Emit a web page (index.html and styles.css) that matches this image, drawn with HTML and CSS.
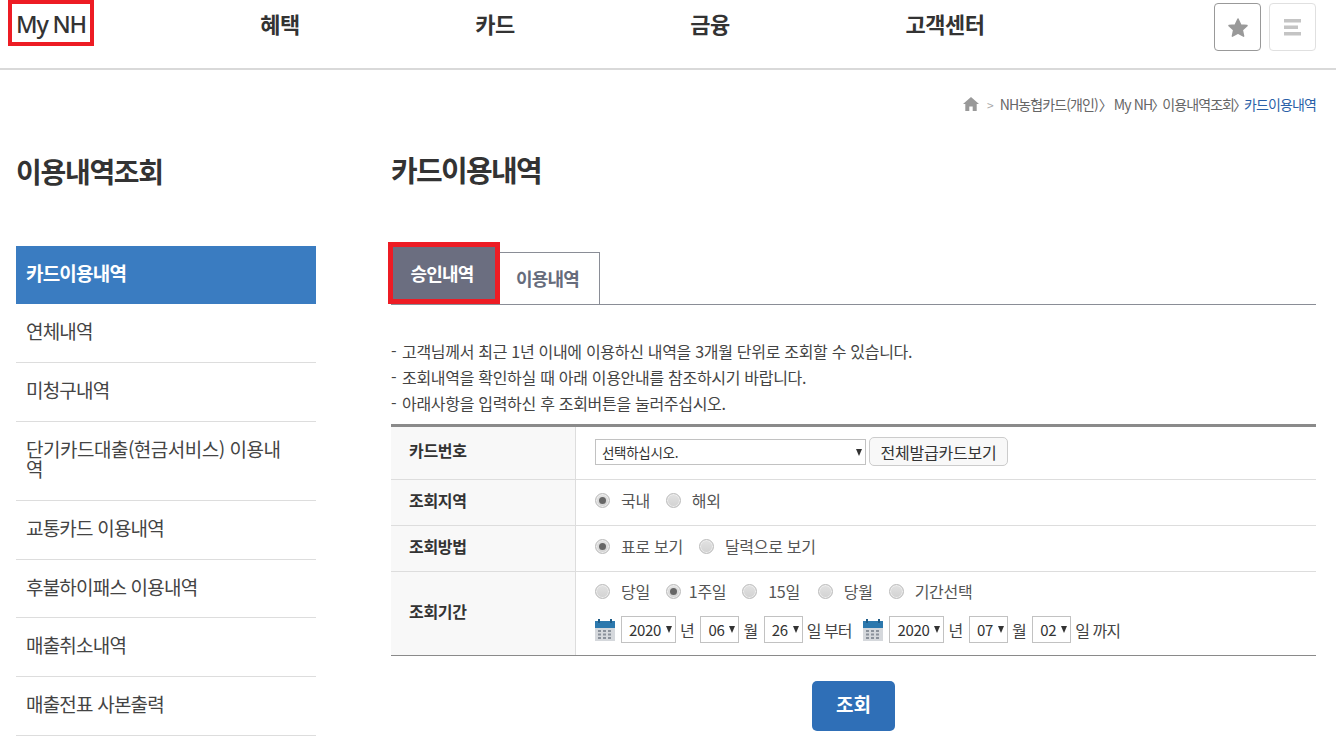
FILE: index.html
```html
<!DOCTYPE html>
<html lang="ko">
<head>
<meta charset="utf-8">
<title>카드이용내역</title>
<link rel="stylesheet" href="styles.css">
</head>
<body>
<header class="top">
  <a class="brand">My NH</a>
  <nav class="gnb">
    <a class="gnb-a">혜택</a>
    <a class="gnb-b">카드</a>
    <a class="gnb-c">금융</a>
    <a class="gnb-d">고객센터</a>
  </nav>
  <div class="tools">
    <button class="tool tool-on" aria-label="즐겨찾기"><svg width="22" height="21" viewBox="0 0 22 21"><path fill="#999" stroke="#999" stroke-width="1.5" stroke-linejoin="round" d="M11 2l2.7 5.9 6.3.7-4.7 4.3 1.3 6.3L11 16.1l-5.600 3.100 1.300-6.300L2 8.600l6.300-.7z"/></svg></button>
    <button class="tool" aria-label="메뉴"><svg width="18" height="17" viewBox="0 0 18 17"><rect x="0" y="0" width="17" height="3.500" fill="#c4c4c4"/><rect x="0" y="6.500" width="14" height="3.500" fill="#c4c4c4"/><rect x="0" y="13" width="17" height="3.500" fill="#c4c4c4"/></svg></button>
  </div>
</header>
<div class="crumbs">
  <svg class="home" width="16" height="14" viewBox="0 0 16 14"><path fill="#999" d="M8 0L0 7h2.300v7h4V9.500h3.400V14h4V7H16z"/></svg>
  <span class="sep">&gt;</span><span>NH농협카드(개인)</span><span class="sep2 sep-wide">〉</span><span>My NH</span><span class="sep2">〉</span><span>이용내역조회</span><span class="sep2">〉</span><span class="here">카드이용내역</span>
</div>
<div class="layout">
  <aside class="side">
    <h2>이용내역조회</h2>
    <ul class="menu">
      <li class="on">카드이용내역</li>
      <li>연체내역</li>
      <li>미청구내역</li>
      <li class="long">단기카드대출(현금서비스) 이용내역</li>
      <li>교통카드 이용내역</li>
      <li class="short">후불하이패스 이용내역</li>
      <li>매출취소내역</li>
      <li>매출전표 사본출력</li>
    </ul>
  </aside>
  <main class="main">
    <h1>카드이용내역</h1>
    <div class="tabs">
      <a class="tab tab-on">승인내역</a>
      <a class="tab">이용내역</a>
    </div>
    <ul class="notes">
      <li>고객님께서 최근 1년 이내에 이용하신 내역을 3개월 단위로 조회할 수 있습니다.</li>
      <li>조회내역을 확인하실 때 아래 이용안내를 참조하시기 바랍니다.</li>
      <li>아래사항을 입력하신 후 조회버튼을 눌러주십시오.</li>
    </ul>
    <div class="form">
      <div class="row r1">
        <div class="th">카드번호</div>
        <div class="td">
          <span class="sel sel-card"><select><option>선택하십시오.</option></select></span>
          <button class="all">전체발급카드보기</button>
        </div>
      </div>
      <div class="row r2">
        <div class="th">조회지역</div>
        <div class="td">
          <label class="radio"><i class="dot on"></i>국내</label>
          <label class="radio"><i class="dot"></i>해외</label>
        </div>
      </div>
      <div class="row r2">
        <div class="th">조회방법</div>
        <div class="td">
          <label class="radio"><i class="dot on"></i>표로 보기</label>
          <label class="radio"><i class="dot"></i>달력으로 보기</label>
        </div>
      </div>
      <div class="row r3">
        <div class="th">조회기간</div>
        <div class="td col">
          <div class="radios">
            <label class="radio"><i class="dot"></i>당일</label>
            <label class="radio tight"><i class="dot on"></i>1주일</label>
            <label class="radio wide"><i class="dot"></i>15일</label>
            <label class="radio"><i class="dot"></i>당월</label>
            <label class="radio"><i class="dot"></i>기간선택</label>
          </div>
          <div class="dates">
            <svg class="cal" width="20" height="22" viewBox="0 0 20 22"><rect x="0" y="2" width="20" height="20" fill="#d5d8dc"/><rect x="0" y="2" width="20" height="7" fill="#2c78ad"/><rect x="3" y="0" width="2" height="4" fill="#1f5c88"/><rect x="15" y="0" width="2" height="4" fill="#1f5c88"/><path fill="#8b929b" d="M3 11h3v2H3zM8 11h3v2H8zM13 11h3v2h-3zM3 14.500h3v2H3zM8 14.500h3v2H8zM13 14.500h3v2h-3zM3 18h3v2H3zM8 18h3v2H8zM13 18h3v2h-3z"/></svg>
            <span class="sel sel-y"><select><option>2020</option></select></span><span class="u">년</span>
            <span class="sel sel-m"><select><option>06</option></select></span><span class="u">월</span>
            <span class="sel sel-m"><select><option>26</option></select></span><span class="u u-end">일 부터</span>
            <svg class="cal cal2" width="20" height="22" viewBox="0 0 20 22"><rect x="0" y="2" width="20" height="20" fill="#d5d8dc"/><rect x="0" y="2" width="20" height="7" fill="#2c78ad"/><rect x="3" y="0" width="2" height="4" fill="#1f5c88"/><rect x="15" y="0" width="2" height="4" fill="#1f5c88"/><path fill="#8b929b" d="M3 11h3v2H3zM8 11h3v2H8zM13 11h3v2h-3zM3 14.500h3v2H3zM8 14.500h3v2H8zM13 14.500h3v2h-3zM3 18h3v2H3zM8 18h3v2H8zM13 18h3v2h-3z"/></svg>
            <span class="sel sel-y"><select><option>2020</option></select></span><span class="u">년</span>
            <span class="sel sel-m"><select><option>07</option></select></span><span class="u">월</span>
            <span class="sel sel-m"><select><option>02</option></select></span><span class="u u-end">일 까지</span>
          </div>
        </div>
      </div>
    </div>
    <div class="actions"><button class="go">조회</button></div>
  </main>
</div>
</body>
</html>
```
FILE: styles.css
```css
* { box-sizing: border-box; }
html, body { margin: 0; height: 737px; overflow: hidden; background: #fff; }
body { font-family: "Noto Sans CJK KR", "Noto Sans", sans-serif; color: #333; font-size: 16px; }
ul { list-style: none; margin: 0; padding: 0; }
h1, h2 { margin: 0; }
button { font-family: inherit; padding: 0; cursor: pointer; }

.top { height: 70px; border-bottom: 2px solid #d9d9d9; display: flex; align-items: flex-start; padding-left: 8px; position: relative; }
.brand { width: 86px; height: 46px; border: 4px solid #ed1c24; font-family: "Noto Sans", sans-serif; font-size: 23.5px; font-weight: 500; letter-spacing: -1.2px; line-height: 40px; text-align: center; color: #333; }
.gnb { display: flex; font-size: 22px; font-weight: 700; letter-spacing: -0.5px; line-height: 46px; color: #333; }
.gnb a { display: block; text-align: center; width: 100px; }
.gnb-a { margin-left: 136px; }
.gnb-b { margin-left: 115px; }
.gnb-c { margin-left: 115px; }
.gnb-d { margin-left: 135px; }
.tools { margin-left: auto; margin-right: 20px; margin-top: 3px; display: flex; gap: 8px; }
.tool { width: 47px; height: 48px; background: #fff; border: 1px solid #e0e0e0; border-radius: 4px; display: flex; align-items: center; justify-content: center; }
.tool-on { border-color: #999; }

.crumbs { display: flex; justify-content: flex-end; align-items: center; height: 24px; margin-top: 22px; padding-right: 20px; font-size: 14px; letter-spacing: -0.9px; color: #666; white-space: nowrap; }
.home { margin-right: 8px; }
.sep { margin-right: 7px; color: #aaa; font-size: 12px; }
.sep2 { width: 11px; text-align: center; margin-left: -1px; margin-right: 0; }
.sep-wide { width: 17px; }
.here { color: #2a5fa8; }

.layout { display: flex; padding-left: 16px; padding-right: 20px; }
.side { width: 300px; flex: none; margin-right: 75px; }
.side h2 { font-size: 28px; font-weight: 700; letter-spacing: -1.3px; line-height: 40px; margin-top: 35px; color: #333; }
.menu { margin-top: 55px; }
.menu li { height: 59px; padding: 0 10px; border-bottom: 1px solid #ddd; font-size: 19px; letter-spacing: -0.8px; line-height: 54px; color: #444; }
.menu li.on { height: 58px; background: #3a7cc1; border-bottom: 0; color: #fff; font-weight: 700; line-height: 54px; }
.menu li.long { height: 79px; padding: 17px 30px 0 10px; line-height: 20px; letter-spacing: -0.5px; }
.menu li.short { height: 58px; }

.main { flex: 1; min-width: 0; }
.main h1 { font-size: 29px; font-weight: 700; letter-spacing: -1.7px; line-height: 42px; margin-top: 32px; color: #333; }
.tabs { display: flex; align-items: flex-end; height: 63px; margin-top: 52px; border-bottom: 1px solid #8a8d96; }
.tab { display: block; width: 100px; height: 52px; padding-right: 4px; border: 1px solid #8a8d96; border-bottom: 0; border-left: 0; font-size: 18px; font-weight: 700; letter-spacing: -0.8px; line-height: 50px; text-align: center; color: #666c7c; background: #fff; }
.tab-on { width: 112px; height: 62px; margin-left: -3px; margin-bottom: 0; border: 5px solid #ed1c24; background: #6b6e80; color: #fff; line-height: 52px; }

.notes { margin-top: 33px; font-size: 16px; letter-spacing: -0.3px; line-height: 26px; color: #444; }
.notes li { padding-left: 11px; position: relative; }
.notes li::before { content: "-"; position: absolute; left: 0; }

.form { margin-top: 8px; border-top: 3px solid #8a8a8a; border-bottom: 1px solid #8a8a8a; }
.row { display: flex; border-bottom: 1px solid #ddd; }
.row:last-child { border-bottom: 0; }
.r1 { height: 53px; }
.r2 { height: 46px; }
.r3 { height: 83px; }
.th { width: 185px; flex: none; background: #f8f8f8; border-right: 1px solid #ddd; padding: 0 0 6px 18px; font-size: 16px; font-weight: 700; letter-spacing: -0.3px; color: #333; display: flex; align-items: center; }
.td { flex: 1; display: flex; align-items: center; padding: 0 0 5px 19px; font-size: 16px; letter-spacing: -0.3px; color: #555; }
.r1 .td { padding-bottom: 3px; }
.col { flex-direction: column; align-items: flex-start; justify-content: flex-start; padding-top: 4px; padding-bottom: 0; }
.radios { display: flex; align-items: center; height: 30px; }
.radio { display: flex; align-items: center; white-space: nowrap; margin-right: 16px; }
.wide { margin-right: 18px; }
.dot { width: 15px; height: 15px; border-radius: 50%; border: 1px solid #bbb; background: linear-gradient(#e2e2e2, #d2d2d2); margin-right: 11px; position: relative; box-shadow: inset 0 0 0 1px #eee; flex: none; }
.dot.on::after { content: ""; position: absolute; left: 3px; top: 3px; width: 7px; height: 7px; border-radius: 50%; background: #666; }
.tight .dot { margin-right: 8px; }

.sel { display: inline-block; position: relative; height: 27px; }
.sel select { appearance: none; width: 100%; height: 100%; border: 1px solid #c2c2c2; background: #fff; font: inherit; letter-spacing: -0.3px; color: #333; padding: 0 0 0 6px; border-radius: 0; }
.sel::after { content: ""; position: absolute; right: 4px; top: 10px; border-left: 3.500px solid transparent; border-right: 3.500px solid transparent; border-top: 7px solid #333; pointer-events: none; }
.sel-card { width: 271px; height: 26px; font-size: 13.5px; }
.sel-y { width: 55px; font-size: 15px; }
.sel-m { width: 39px; font-size: 15px; }
.sel-y select, .sel-m select { padding-left: 7px; }
.all { width: 139px; height: 29px; margin-left: 3px; border: 1px solid #ccc; border-radius: 5px; background: #f8f8f8; font-size: 16px; letter-spacing: -0.2px; color: #333; }

.dates { display: flex; align-items: center; height: 31px; margin-top: 8px; }
.cal { margin-right: 6px; flex: none; }
.cal2 { margin-left: 6px; }
.u { margin: 0 6px 0 4px; white-space: nowrap; color: #444; }
.u-end { letter-spacing: -1px; }

.actions { display: flex; justify-content: center; margin-top: 25px; }
.go { width: 83px; height: 50px; border: 0; border-radius: 5px; padding-bottom: 5px; background: #2f6fb7; color: #fff; font-size: 19px; font-weight: 700; }
```
